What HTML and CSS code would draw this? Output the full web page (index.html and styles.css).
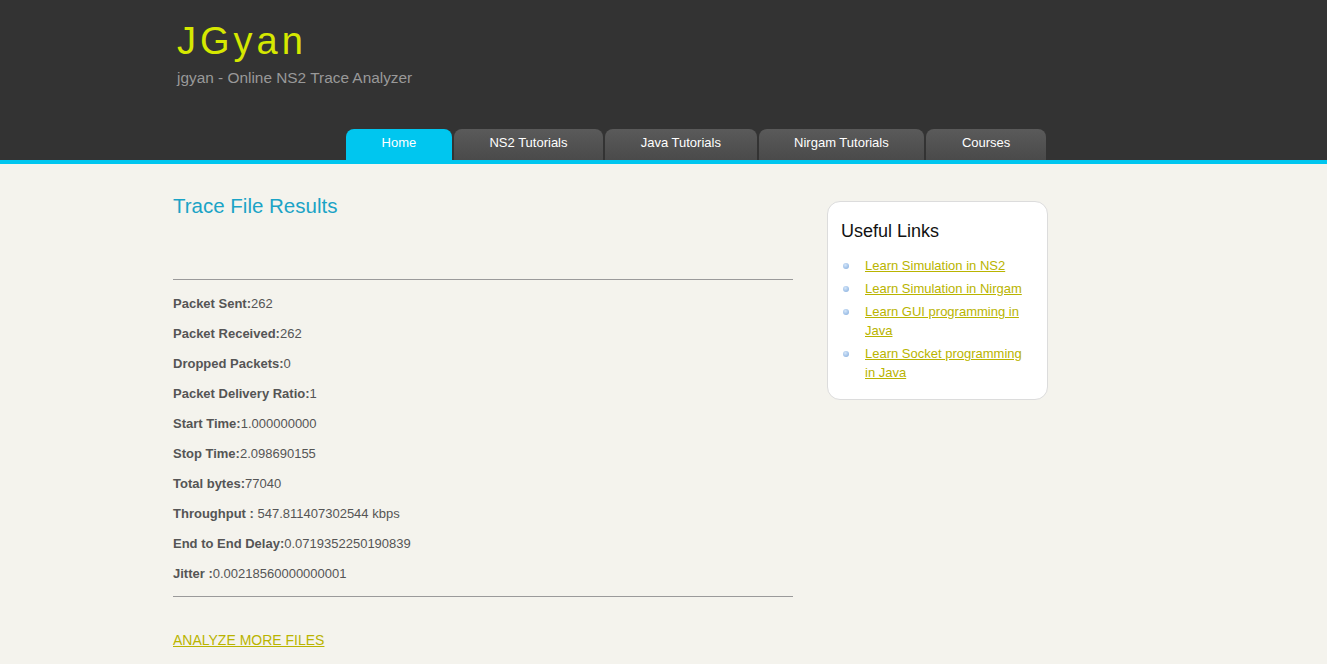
FILE: index.html
```html
<!DOCTYPE html>
<html>
<head>
<meta charset="utf-8">
<title>JGyan - Trace File Results</title>
<link rel="stylesheet" href="styles.css">
</head>
<body>
<header class="header">
  <div class="container header-inner">
    <div class="brand">
      <div class="logo">JGyan</div>
      <div class="tagline">jgyan - Online NS2 Trace Analyzer</div>
    </div>
    <nav class="nav">
      <a class="tab active" href="#">Home</a>
      <a class="tab" href="#">NS2 Tutorials</a>
      <a class="tab" href="#">Java Tutorials</a>
      <a class="tab" href="#">Nirgam Tutorials</a>
      <a class="tab" href="#">Courses</a>
    </nav>
  </div>
</header>
<div class="container content">
  <main class="main">
    <h1 class="title">Trace File Results</h1>
    <hr class="rule rule-top">
    <div class="stats">
      <p><b>Packet Sent:</b>262</p>
      <p><b>Packet Received:</b>262</p>
      <p><b>Dropped Packets:</b>0</p>
      <p><b>Packet Delivery Ratio:</b>1</p>
      <p><b>Start Time:</b>1.000000000</p>
      <p><b>Stop Time:</b>2.098690155</p>
      <p><b>Total bytes:</b>77040</p>
      <p><b>Throughput : </b>547.811407302544 kbps</p>
      <p><b>End to End Delay:</b>0.0719352250190839</p>
      <p><b>Jitter :</b>0.00218560000000001</p>
    </div>
    <hr class="rule rule-bottom">
    <a class="more" href="#">ANALYZE MORE FILES</a>
  </main>
  <aside class="sidebar">
    <h2 class="side-title">Useful Links</h2>
    <ul class="links">
      <li><a href="#">Learn Simulation in NS2</a></li>
      <li><a href="#">Learn Simulation in Nirgam</a></li>
      <li><a href="#">Learn GUI programming in Java</a></li>
      <li><a href="#">Learn Socket programming in Java</a></li>
    </ul>
  </aside>
</div>
</body>
</html>
```
FILE: styles.css
```css
html, body {
  margin: 0;
  padding: 0;
}
body {
  background: #f4f3ed;
  font-family: "Liberation Sans", Arial, sans-serif;
  color: #555;
  font-size: 13px;
}
.container {
  width: 980px;
  margin-left: calc(50% - 490.5px);
}
.header {
  background: #333333;
  border-bottom: 4px solid #00c6ef;
}
.header-inner {
  height: 160px;
  display: flex;
  flex-direction: column;
}
.brand {
  padding: 19px 0 0 4px;
}
.logo {
  font-size: 38px;
  line-height: 44px;
  letter-spacing: 4px;
  color: #d6e800;
}
.tagline {
  margin-top: 6px;
  font-size: 15.4px;
  line-height: 18px;
  color: #999;
}
.nav {
  margin-top: auto;
  display: flex;
  gap: 2px;
  padding-left: 173px;
}
.tab {
  display: block;
  height: 31px;
  line-height: 28px;
  padding: 0 35.6px;
  border-radius: 8px 8px 0 0;
  background: linear-gradient(#5a5a5a, #4a4a4a);
  color: #fff;
  font-size: 13px;
  text-decoration: none;
}
.tab.active {
  background: #00c6ef;
}
.content {
  display: flex;
  gap: 34px;
  align-items: flex-start;
}
.main {
  width: 620px;
  padding-top: 30px;
}
.title {
  margin: 0;
  font-size: 20.5px;
  line-height: 24px;
  font-weight: normal;
  color: #1aa3c6;
}
.rule {
  border: 0;
  border-top: 1px solid #9a9a9a;
  height: 0;
  margin: 0;
}
.rule-top {
  margin-top: 61px;
}
.stats {
  padding: 15px 0 14px;
}
.stats p {
  margin: 0 0 13px;
  line-height: 17px;
}
.stats p:last-child {
  margin-bottom: 0;
}
.stats b {
  color: #555;
}
.more {
  display: inline-block;
  margin-top: 35px;
  font-size: 14px;
  line-height: 17px;
  color: #b9b400;
}
.sidebar {
  width: 221px;
  box-sizing: border-box;
  margin-top: 37px;
  background: #fff;
  border: 1px solid #dcdcdc;
  border-radius: 13px;
  padding: 18px 20px 17px 13px;
}
.side-title {
  margin: 0;
  font-size: 18px;
  line-height: 22px;
  font-weight: normal;
  color: #111;
}
.links {
  list-style: none;
  margin: 14px 0 0;
  padding: 0 0 0 24px;
}
.links li {
  position: relative;
  line-height: 19px;
  margin-bottom: 4px;
}
.links li:last-child {
  margin-bottom: 0;
}
.links li::before {
  content: "";
  position: absolute;
  left: -22px;
  top: 7px;
  width: 6px;
  height: 6px;
  border-radius: 50%;
  background: radial-gradient(circle at 40% 35%, #d4e6fa, #7fa9db);
}
.links a {
  color: #b9b400;
}
```
